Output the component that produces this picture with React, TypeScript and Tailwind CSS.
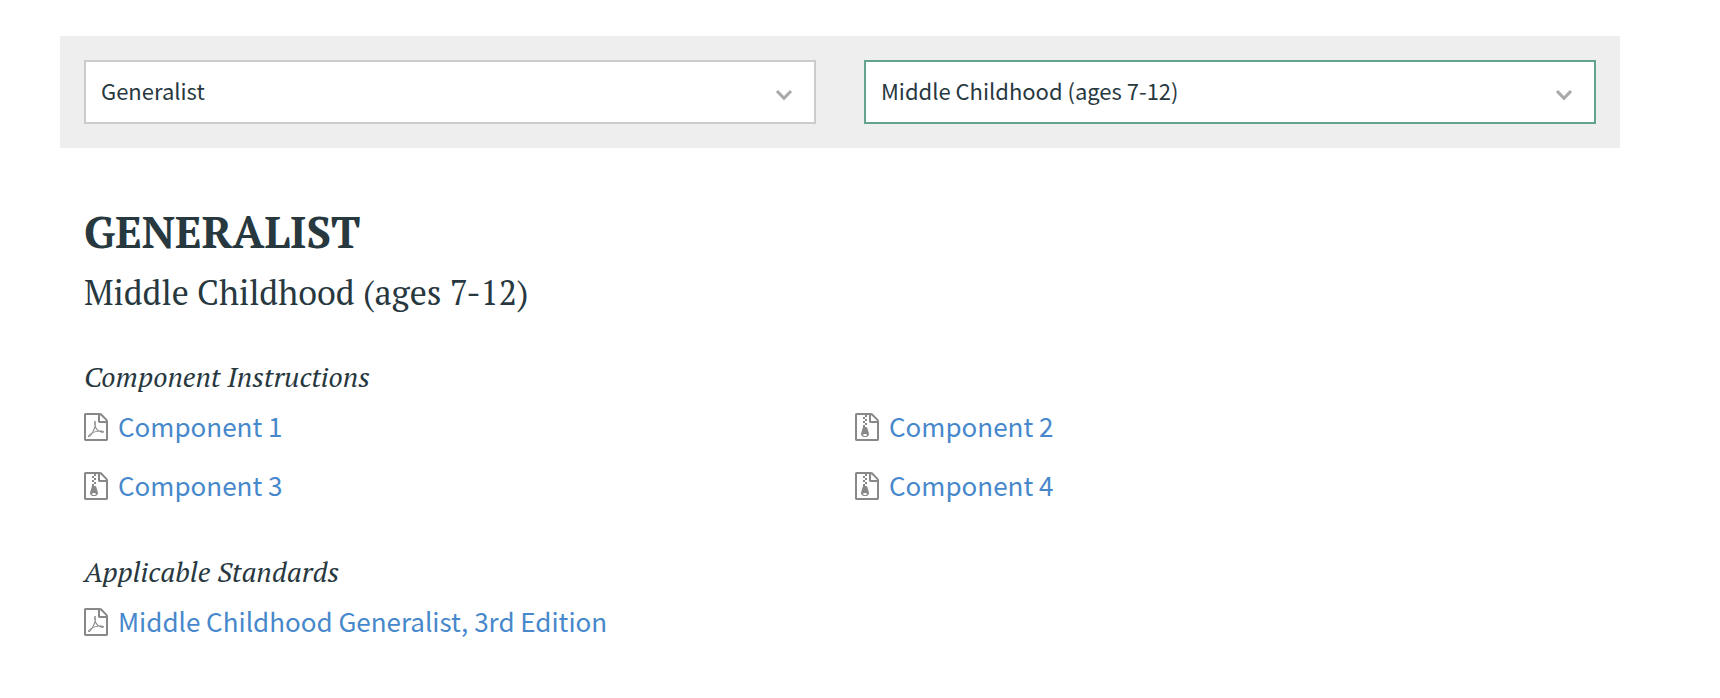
import React from "react";

type IconKind = "pdf" | "zip";

interface DocumentLink {
  label: string;
  icon: IconKind;
}

const components: DocumentLink[] = [
  { label: "Component 1", icon: "pdf" },
  { label: "Component 2", icon: "zip" },
  { label: "Component 3", icon: "zip" },
  { label: "Component 4", icon: "zip" },
];

const standards: DocumentLink[] = [
  { label: "Middle Childhood Generalist, 3rd Edition", icon: "pdf" },
];

const iconPaths: Record<IconKind, string> = {
  pdf: "M1468 380q28 28 48 76t20 88v1152q0 40-28 68t-68 28h-1344q-40 0-68-28t-28-68v-1600q0-40 28-68t68-28h896q40 0 88 20t76 48zM1024 136v376h376q-10-29-22-41l-313-313q-12-12-41-22zM1408 1664v-1024h-416q-40 0-68-28t-28-68v-416h-768v1536h1280zM894 1071q33 26 84 56 59-7 117-7 147 0 177 49 16 22 2 52 0 1-1 2l-2 2v1q-6 38-71 38-48 0-115-20t-130-53q-221 24-392 83-153 262-242 262-15 0-28-7l-24-12q-1-1-6-5-10-10-6-36 9-40 56-91.500t132-96.500q14-9 23 6 2 2 2 4 52-85 107-197 68-136 104-262-24-82-30.500-159.500t6.500-127.500q11-40 42-40h22q23 0 35 15 18 21 9 68-2 6-4 8 1 3 1 8v30q-2 123-14 192 55 164 146 238zM318 1482q52-24 137-158-51 40-87.500 84t-49.500 74zM716 562q-15 42-2 132 1-7 7-44 0-3 7-43 1-4 4-8-1-1-1-2t-1-2q-1-22-13-36 0 1-1 2v2zM592 1223q135-54 284-81-2-1-13-9.500t-16-13.500q-76-67-127-176-27 86-83 197-30 56-45 83zM1238 1207q-24-24-140-24 76 28 124 28 14 0 18-1 0-1-2-3z",
  zip: "M640 384v-128h-128v128h128zM768 512v-128h-128v128h128zM640 640v-128h-128v128h128zM768 768v-128h-128v128h128zM1468 380q28 28 48 76t20 88v1152q0 40-28 68t-68 28h-1344q-40 0-68-28t-28-68v-1600q0-40 28-68t68-28h896q40 0 88 20t76 48zM1024 136v376h376q-10-29-22-41l-313-313q-12-12-41-22zM1408 1664v-1024h-416q-40 0-68-28t-28-68v-416h-128v128h-128v-128h-512v1536h1280zM781 943l107 349q8 27 8 52 0 83-72.500 137.500t-183.500 54.500-183.500-54.500-72.500-137.500q0-25 8-52 21-63 120-396v-128h128v128h79q22 0 39 13t23 34zM640 1472q53 0 90.500-19t37.500-45-37.500-45-90.500-19-90.500 19-37.500 45 37.500 45 90.500 19z",
};

function FileIcon({ kind }: { kind: IconKind }) {
  return (
    <svg viewBox="0 0 1536 1792" className="h-7 w-6 shrink-0 fill-[#888888]" aria-hidden="true">
      <path d={iconPaths[kind]} />
    </svg>
  );
}

function Dropdown({ label, options, active }: { label: string; options: string[]; active?: boolean }) {
  return (
    <div className="relative min-w-0 flex-1">
      <select
        aria-label={label}
        className={
          "h-16 w-full appearance-none rounded-none border-2 bg-white pr-14 pb-1 pl-[15px] text-[22px] outline-none " +
          (active ? "border-[#62a48f]" : "border-[#cbcbcb]")
        }
      >
        {options.map((option) => (
          <option key={option}>{option}</option>
        ))}
      </select>
      <svg
        viewBox="0 0 18 12"
        className="pointer-events-none absolute top-[29px] right-[23px] h-3 w-[18px] fill-none stroke-[#aaaaaa]"
        aria-hidden="true"
      >
        <path d="M2 2 9 9.300 16 2" strokeWidth="3.200" />
      </svg>
    </div>
  );
}

function DocumentSection({ title, links, className }: { title: string; links: DocumentLink[]; className: string }) {
  return (
    <section className={className}>
      <h3 className="font-['PT_Serif','Liberation_Serif',serif] text-[28px] leading-8 italic">{title}</h3>
      <ul className="mt-5 grid grid-cols-2 gap-x-[30px] gap-y-[31px]">
        {links.map((link) => (
          <li key={link.label}>
            <a href="#" className="flex h-7 items-start gap-[10px] text-[26px] leading-[26px] whitespace-nowrap text-[#4688cb]">
              <FileIcon kind={link.icon} />
              {link.label}
            </a>
          </li>
        ))}
      </ul>
    </section>
  );
}

export default function App() {
  return (
    <main className="bg-white pt-9 pr-25 pb-14 pl-15 font-['Source_Sans_Pro','Noto_Sans_CJK_SC',sans-serif] text-[#28383f]">
      <form className="flex gap-12 bg-[#eeeeee] p-6">
        <Dropdown label="Certificate area" options={["Generalist"]} />
        <Dropdown label="Age range" options={["Middle Childhood (ages 7-12)"]} active />
      </form>
      <div className="px-6 pt-15">
        <h1 className="font-['PT_Serif','Liberation_Serif',serif] text-[44px] leading-12 font-bold">GENERALIST</h1>
        <h2 className="mt-[17px] font-['PT_Serif','Liberation_Serif',serif] text-[34px] leading-10">
          Middle Childhood (ages 7-12)
        </h2>
        <DocumentSection title="Component Instructions" links={components} className="mt-12" />
        <DocumentSection title="Applicable Standards" links={standards} className="mt-14" />
      </div>
    </main>
  );
}
